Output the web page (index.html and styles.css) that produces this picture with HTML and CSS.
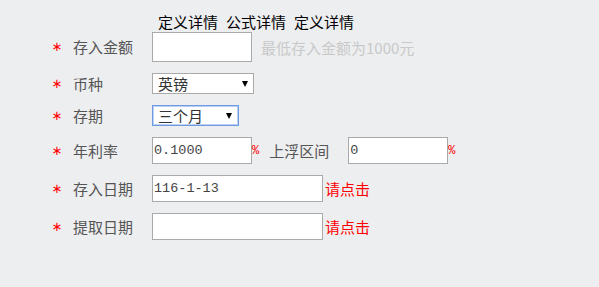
FILE: index.html
```html
<!DOCTYPE html>
<html lang="zh-CN">

<head>
    <meta charset="UTF-8">
    <meta name="viewport" content="width=device-width, initial-scale=1.0">
    <title>存款计算</title>
    <link rel="stylesheet" href="styles.css">
</head>

<body>
    <!-- 顶部标签 -->
    <div class="tabs">
        <a href="#">定义详情</a>
        <a href="#">公式详情</a>
        <a href="#">定义详情</a>
    </div>

    <div class="form">
        <div class="row">
            <span class="star">∗</span>
            <label class="label">存入金额</label>
            <input type="text" class="ipt ipt-tall">
            <span class="hint">最低存入金额为1000元</span>
        </div>
        <div class="row">
            <span class="star">∗</span>
            <label class="label">币种</label>
            <span class="sel sel-long">
                <select>
                    <option>英镑</option>
                </select>
            </span>
        </div>
        <div class="row">
            <span class="star">∗</span>
            <label class="label">存期</label>
            <span class="sel sel-short sel-focus">
                <select>
                    <option>三个月</option>
                </select>
            </span>
        </div>
        <div class="row">
            <span class="star">∗</span>
            <label class="label">年利率</label>
            <input type="text" class="ipt" value="0.1000">
            <span class="pct">%</span>
            <span class="float-label">上浮区间</span>
            <input type="text" class="ipt" value="0">
            <span class="pct">%</span>
        </div>
        <div class="row">
            <span class="star">∗</span>
            <label class="label">存入日期</label>
            <input type="text" class="ipt ipt-wide" value="116-1-13">
            <a href="#" class="pick">请点击</a>
        </div>
        <div class="row">
            <span class="star">∗</span>
            <label class="label">提取日期</label>
            <input type="text" class="ipt ipt-wide">
            <a href="#" class="pick">请点击</a>
        </div>
    </div>
</body>

</html>
```

FILE: styles.css
```css
* {
    margin: 0;
    padding: 0;
}

a {
    text-decoration: none;
}

body {
    background-color: #edeef0;
    font: 15px "Noto Sans CJK SC", sans-serif;
}

.tabs {
    display: flex;
    gap: 8px;
    padding: 12px 0 0 158px;
    line-height: 20px;
}

.tabs a {
    color: #000;
}

.form {
    display: flex;
    flex-direction: column;
    gap: 11px;
    padding-left: 47px;
}

.row {
    display: flex;
    align-items: center;
}

.star {
    width: 20px;
    text-align: center;
    color: #f00;
    font-family: "DejaVu Sans", sans-serif;
    font-size: 13px;
    line-height: 20px;
}

.label {
    width: 79px;
    margin-left: 6px;
    color: #555;
    line-height: 20px;
}

.ipt {
    box-sizing: border-box;
    width: 100px;
    height: 27px;
    border: 1px solid #aaa;
    background-color: #fff;
    padding: 0 1px;
    font: 13.5px "Liberation Mono", monospace;
    color: #444;
    outline: none;
}

.ipt-tall {
    height: 30px;
}

.ipt-wide {
    width: 171px;
}

.hint {
    margin-left: 9px;
    color: #c9c9c9;
}

.pct {
    color: #f00;
    font: 12px "Liberation Mono", monospace;
}

.float-label {
    margin: 0 19px 0 10px;
    color: #555;
}

.pick {
    margin-left: 2px;
    color: #f00;
}

/* 下拉框 */
.sel {
    position: relative;
    display: inline-block;
}

.sel select {
    display: block;
    box-sizing: border-box;
    appearance: none;
    height: 21px;
    border: 1px solid #aaa;
    border-radius: 0;
    background-color: #fff;
    padding: 0 0 0 5px;
    font: 15px/19px "Noto Sans CJK SC", sans-serif;
    color: #333;
    outline: none;
}

.sel::after {
    content: "";
    position: absolute;
    top: 8px;
    right: 6px;
    border-left: 3px solid transparent;
    border-right: 3px solid transparent;
    border-top: 6px solid #000;
    pointer-events: none;
}

.sel-long select {
    width: 102px;
}

.sel-short select {
    width: 87px;
}

.sel-short::after {
    right: 7px;
}

.sel-focus select {
    border-color: #6f9ae3;
    box-shadow: inset 0 0 0 1px #b9cff3;
}
```
